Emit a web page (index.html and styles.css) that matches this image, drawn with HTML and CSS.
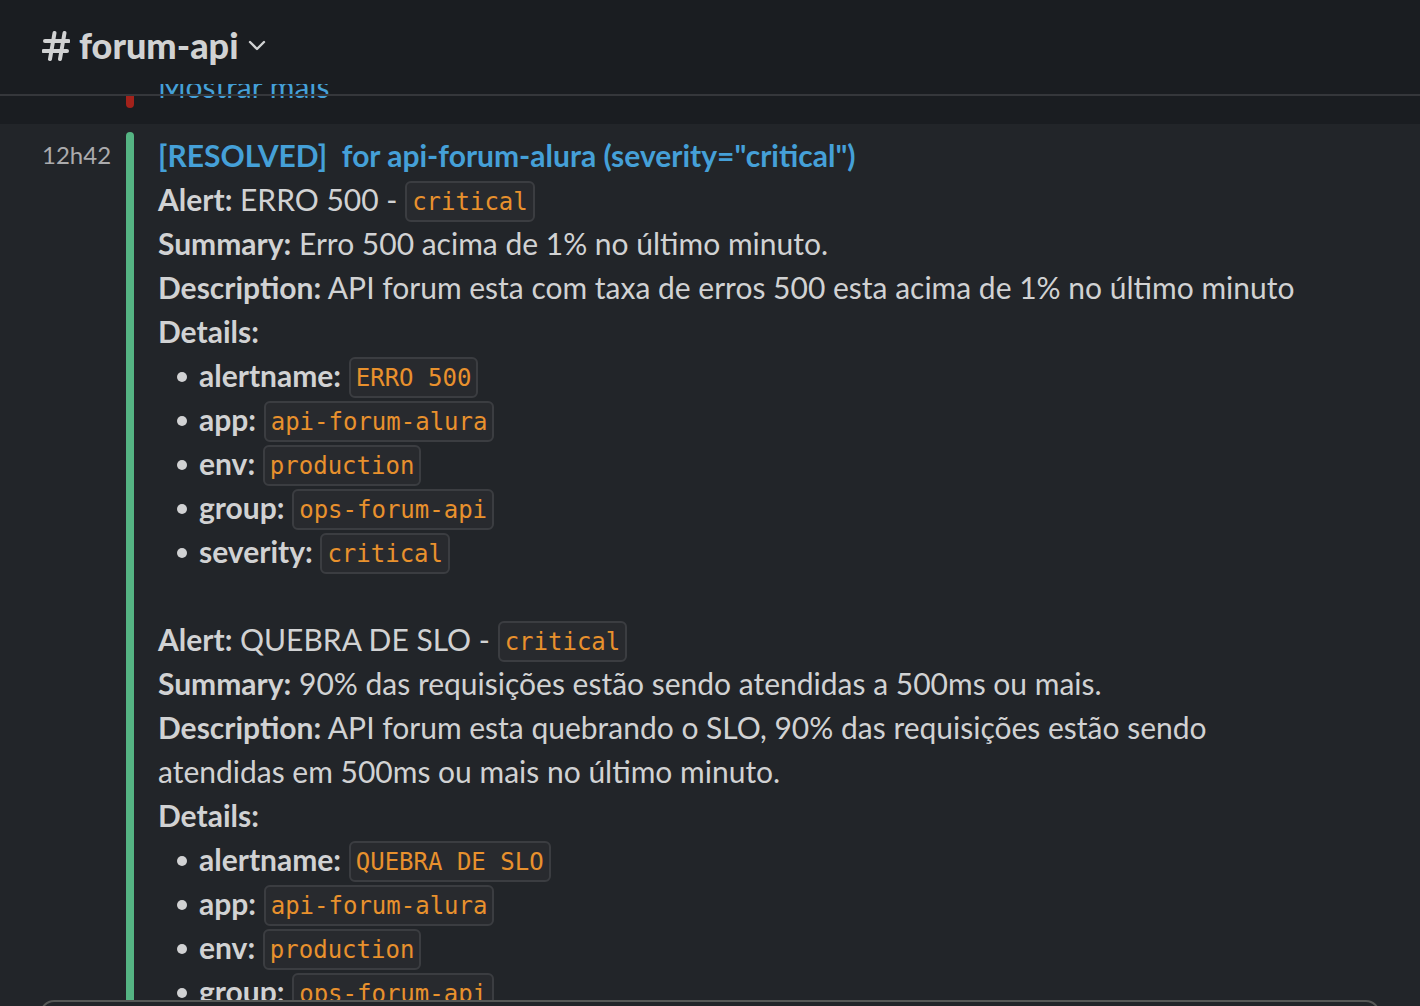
FILE: index.html
```html
<!DOCTYPE html>
<html lang="pt-BR">
<head>
<meta charset="utf-8">
<title>forum-api</title>
<link rel="stylesheet" href="styles.css">
</head>
<body>
<div class="app">
  <header class="channel-header">
    <svg class="hash" width="28" height="30" viewBox="0 0 28 30" aria-hidden="true">
      <g fill="none" stroke="#d1d2d3" stroke-width="4" stroke-linecap="round">
        <line x1="12.5" y1="2" x2="8" y2="28"/>
        <line x1="22.5" y1="2" x2="18" y2="28"/>
        <line x1="3" y1="10" x2="26.5" y2="10"/>
        <line x1="1.5" y1="20" x2="25" y2="20"/>
      </g>
    </svg>
    <h1 class="channel-name">forum-api</h1>
    <svg class="chevron" width="18" height="12" viewBox="0 0 18 12" aria-hidden="true">
      <polyline points="2,2 9,9 16,2" fill="none" stroke="#d1d2d3" stroke-width="2.4" stroke-linecap="round" stroke-linejoin="round"/>
    </svg>
  </header>

  <main class="messages">
    <div class="divider"></div>
    <div class="prev-msg">
      <div class="prev-bar"></div>
      <a class="link">Mostrar mais</a>
    </div>

    <div class="msg">
      <div class="gutter"><span class="ts">12h42</span></div>
      <div class="attachment">
        <div class="att-bar"></div>
        <div class="att-body">
          <div class="att-title"><a class="link">[RESOLVED]&nbsp; for api-forum-alura (severity="critical")</a></div>

          <p class="line"><b>Alert:</b> ERRO 500 - <code>critical</code></p>
          <p class="line"><b>Summary:</b> Erro 500 acima de 1% no último minuto.</p>
          <p class="line"><b>Description:</b> API forum esta com taxa de erros 500 esta acima de 1% no último minuto</p>
          <p class="line"><b>Details:</b></p>
          <ul class="details">
            <li><b>alertname:</b> <code>ERRO 500</code></li>
            <li><b>app:</b> <code>api-forum-alura</code></li>
            <li><b>env:</b> <code>production</code></li>
            <li><b>group:</b> <code>ops-forum-api</code></li>
            <li><b>severity:</b> <code>critical</code></li>
          </ul>

          <p class="line blank">&nbsp;</p>

          <p class="line"><b>Alert:</b> QUEBRA DE SLO - <code>critical</code></p>
          <p class="line"><b>Summary:</b> 90% das requisições estão sendo atendidas a 500ms ou mais.</p>
          <p class="line"><b>Description:</b> API forum esta quebrando o SLO, 90% das requisições estão sendo atendidas em 500ms ou mais no último minuto.</p>
          <p class="line"><b>Details:</b></p>
          <ul class="details">
            <li><b>alertname:</b> <code>QUEBRA DE SLO</code></li>
            <li><b>app:</b> <code>api-forum-alura</code></li>
            <li><b>env:</b> <code>production</code></li>
            <li><b>group:</b> <code>ops-forum-api</code></li>
            <li><b>severity:</b> <code>critical</code></li>
          </ul>
        </div>
      </div>
    </div>
  </main>

  <div class="composer-wrap">
    <div class="composer"></div>
  </div>
</div>
</body>
</html>
```

FILE: styles.css
```css
html, body {
  margin: 0;
  padding: 0;
  height: 1006px;
  overflow: hidden;
  background: #1a1d21;
}

body {
  font-family: Lato, "Noto Sans", sans-serif;
  color: #d1d2d3;
  -webkit-font-smoothing: antialiased;
}

.app {
  display: flex;
  flex-direction: column;
}

/* Header */
.channel-header {
  box-sizing: border-box;
  height: 84px;
  padding: 5px 0 0 42px;
  display: flex;
  align-items: center;
  background: #1a1d21;
  position: relative;
  z-index: 2;
}

.hash {
  display: block;
  margin: 2px 9px 0 0;
}

.channel-name {
  margin: 0 9px 0 0;
  font-size: 36px;
  line-height: 44px;
  font-weight: 900;
  color: #d1d2d3;
}

.chevron {
  display: block;
  margin-top: 2px;
}

/* Messages */
.messages {
  position: relative;
  height: 916px;
  overflow: hidden;
  background: #1a1d21;
}

.divider {
  position: absolute;
  left: 0;
  right: 0;
  top: 10px;
  height: 2px;
  background: #35373b;
  z-index: 3;
}

.link {
  color: #45a0d8;
  text-decoration: none;
}

.prev-msg {
  display: flex;
  align-items: flex-end;
  gap: 24px;
  margin-top: -20px;
  padding: 0 0 16px 126px;
  font-size: 30px;
  line-height: 44px;
}

.prev-bar {
  width: 8px;
  height: 12px;
  background: #a3221b;
  border-radius: 0 0 4px 4px;
  flex: none;
}

.msg {
  display: flex;
  background: #222529;
  padding: 8px 40px 0 0;
  min-height: 900px;
}

.gutter {
  box-sizing: border-box;
  width: 126px;
  padding-left: 42px;
  flex: none;
}

.ts {
  display: block;
  margin-top: 1px;
  font-size: 24px;
  line-height: 44px;
  color: #ababad;
}

.attachment {
  display: flex;
  flex: 1;
}

.att-bar {
  width: 8px;
  flex: none;
  background: #55b483;
  border-radius: 4px 4px 0 0;
}

.att-body {
  padding: 1px 0 0 24px;
  max-width: 1160px;
  font-size: 30px;
  line-height: 44px;
}

.att-title {
  font-weight: 700;
}

.line {
  margin: 0;
}

b {
  font-weight: 700;
}

code {
  font-family: "DejaVu Sans Mono", "Liberation Mono", monospace;
  font-size: 24px;
  line-height: 20px;
  color: #e8912d;
  background: #282a2e;
  border: 2px solid #3b3d41;
  border-radius: 6px;
  padding: 5px 5px 4px;
  vertical-align: 1px;
}

.details {
  list-style: none;
  margin: 0;
  padding: 0;
}

.details li {
  height: 44px;
}

.details li::before {
  content: "";
  display: inline-block;
  width: 10px;
  height: 10px;
  border-radius: 50%;
  background: #d1d2d3;
  margin: 0 12px 0 19px;
  vertical-align: 5px;
}

/* Composer */
.composer-wrap {
  background: #222529;
  padding: 0 40px;
  height: 160px;
}

.composer {
  height: 150px;
  border: 2px solid #565856;
  border-radius: 14px;
  background: #222529;
}
```
